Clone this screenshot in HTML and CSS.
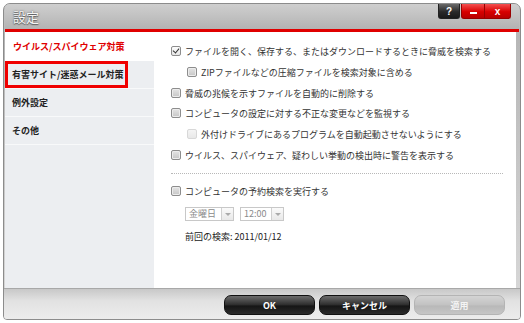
FILE: index.html
```html
<!DOCTYPE html>
<html lang="ja">
<head>
    <meta charset="UTF-8">
    <title>設定</title>
    <link rel="stylesheet" href="styles.css">
</head>
<body>
    <div class="window">
        <div class="titlebar">
            <span class="title">設定</span>
            <div class="caption-buttons">
                <span class="cap help">?</span>
                <span class="cap red min"><i></i></span>
                <span class="cap red close">x</span>
            </div>
        </div>

        <div class="main">
            <ul class="sidebar">
                <li class="active">ウイルス/スパイウェア対策</li>
                <li class="marked"><span class="mark">有害サイト/迷惑メール対策</span></li>
                <li>例外設定</li>
                <li>その他</li>
            </ul>

            <div class="content">
                <div class="row"><span class="check checked"></span>ファイルを開く、保存する、またはダウンロードするときに脅威を検索する</div>
                <div class="row sub"><span class="check"></span>ZIPファイルなどの圧縮ファイルを検索対象に含める</div>
                <div class="row"><span class="check"></span>脅威の兆候を示すファイルを自動的に削除する</div>
                <div class="row"><span class="check"></span>コンピュータの設定に対する不正な変更などを監視する</div>
                <div class="row sub"><span class="check disabled"></span>外付けドライブにあるプログラムを自動起動させないようにする</div>
                <div class="row"><span class="check"></span>ウイルス、スパイウェア、疑わしい挙動の検出時に警告を表示する</div>
                <hr class="dots">
                <div class="row"><span class="check"></span>コンピュータの予約検索を実行する</div>
                <div class="schedule">
                    <span class="select day"><span class="value">金曜日</span><span class="arrow"></span></span>
                    <span class="select time"><span class="value">12:00</span><span class="arrow"></span></span>
                </div>
                <p class="last-scan">前回の検索: 2011/01/12</p>
            </div>
        </div>

        <div class="footer">
            <button class="btn">OK</button>
            <button class="btn">キャンセル</button>
            <button class="btn" disabled>適用</button>
        </div>
    </div>
</body>
</html>
```

FILE: styles.css
```css
body {
    margin: 0;
    padding: 0;
    background-color: #fff;
    font-family: "Noto Sans CJK JP", "Liberation Sans", sans-serif;
    font-size: 9px;
    color: #333;
}

.window {
    margin: 3px 0 0 3px;
    width: 518px;
    height: 317px;
    box-sizing: border-box;
    border: 1px solid #8c8c8c;
    border-radius: 7px 7px 4px 4px;
    background: linear-gradient(#c9c9c9, #b6b6b6 10%, #d6d6d6 90%, #e4e4e4);
    display: flex;
    flex-direction: column;
    overflow: hidden;
}

/* title bar */
.titlebar {
    height: 25px;
    margin: 0 1px;
    border-bottom: 3px solid #e00000;
    display: flex;
    justify-content: space-between;
    align-items: flex-start;
    background: linear-gradient(#cfcfcf, #b3b3b3);
}

.title {
    font-size: 13px;
    line-height: 25px;
    padding-left: 8px;
    color: #f6f6f6;
    text-shadow: 0 0 2px #555, 0 1px 1px #666;
}

.caption-buttons {
    display: flex;
    margin-right: 8px;
}

.cap {
    height: 14px;
    display: flex;
    justify-content: center;
    align-items: center;
    color: #fff;
    font-family: "Liberation Sans", sans-serif;
    font-weight: bold;
    font-size: 10px;
    border-radius: 0 0 3px 3px;
}

.help {
    width: 20px;
    margin-right: 1px;
    background: linear-gradient(#6a6a6a, #2a2a2a 55%, #1a1a1a);
    border: 1px solid #222;
    border-top: none;
}

.red {
    background: linear-gradient(#f45050, #d80000 55%, #b80000);
    border: 1px solid #900;
    border-top: none;
}

.min {
    width: 22px;
    border-radius: 0 0 0 3px;
}

.min i {
    width: 7px;
    height: 2px;
    margin-top: 4px;
    background-color: #fff;
}

.close {
    width: 25px;
    border-left: none;
    border-radius: 0 0 3px 0;
}

/* body */
.main {
    height: 256px;
    margin: 0 4px 0 1px;
    display: flex;
}

.sidebar {
    width: 149px;
    margin: 0;
    padding: 0;
    list-style: none;
    background-color: #eceef1;
}

.sidebar li {
    height: 27px;
    line-height: 27px;
    padding-left: 7px;
    border-bottom: 1px solid #f8f9fa;
    font-weight: bold;
    color: #222;
}

.sidebar li.active {
    height: 29px;
    line-height: 29px;
    padding-left: 8px;
    background-color: #fff;
    color: #e00000;
    border-bottom: none;
}

.sidebar li.marked {
    padding-left: 0;
}

.mark {
    display: inline-block;
    width: 123px;
    height: 27px;
    line-height: 21px;
    box-sizing: border-box;
    padding-left: 4px;
    border: 3px solid #f00000;
}

.content {
    flex: 1;
    background-color: #fff;
    padding: 9px 13px 0 17px;
}

.row {
    height: 20px;
    display: flex;
    align-items: center;
}

.row.sub {
    height: 22px;
    padding-left: 16px;
}

.check {
    width: 10px;
    height: 10px;
    box-sizing: border-box;
    margin-right: 4px;
    border: 1px solid #8d8d8d;
    border-radius: 2px;
    background: linear-gradient(#e4e4e4, #c6c6c6);
    box-shadow: inset 0 0 0 1px #ececec;
    position: relative;
}

.check.checked {
    background: linear-gradient(#fdfdfd, #e6e6e6);
    box-shadow: none;
}

.check.checked::after {
    content: "";
    position: absolute;
    left: 2px;
    top: 0;
    width: 3px;
    height: 5px;
    border: solid #333;
    border-width: 0 1.5px 1.5px 0;
    transform: rotate(40deg);
}

.check.disabled {
    border-color: #d8d8d8;
    background: linear-gradient(#f4f4f4, #e8e8e8);
    box-shadow: none;
}

.dots {
    margin: 8px 0 7px;
    border: none;
    border-top: 1px dotted #b8b8b8;
}

.schedule {
    display: flex;
    gap: 6px;
    margin: 6px 0 0 14px;
}

.select {
    height: 14px;
    box-sizing: border-box;
    display: flex;
    border: 1px solid #c8c8c8;
    color: #8a8a8a;
    white-space: nowrap;
}

.select .value {
    line-height: 12px;
    padding-left: 3px;
    box-sizing: border-box;
}

.day .value {
    width: 35px;
}

.time .value {
    width: 30px;
}

.arrow {
    width: 11px;
    border-left: 1px solid #d0d0d0;
    background: linear-gradient(#fafafa, #e8e8e8);
    position: relative;
}

.arrow::after {
    content: "";
    position: absolute;
    left: 3px;
    top: 5px;
    border: 3px solid transparent;
    border-top: 3px solid #aaa;
    border-bottom: none;
}

.last-scan {
    margin: 9px 0 0 14px;
    color: #222;
}

/* footer */
.footer {
    flex: 1;
    display: flex;
    justify-content: flex-end;
    align-items: center;
    gap: 4px;
    padding: 2px 15px 0 0;
    border-top: 1px solid #a8a8a8;
    background: linear-gradient(#c8c8c8, #e2e2e2 40%, #ececec);
}

.btn {
    width: 91px;
    height: 20px;
    padding: 0;
    border: 1px solid #111;
    border-radius: 7px;
    background: linear-gradient(#6c6c6c, #2c2c2c 50%, #151515 55%, #2a2a2a);
    color: #fff;
    font-family: "Noto Sans CJK JP", "Liberation Sans", sans-serif;
    font-size: 9px;
    font-weight: bold;
}

.btn:disabled {
    border-color: #b4b4b4;
    background: linear-gradient(#d4d4d4, #c2c2c2 50%, #b8b8b8 55%, #c6c6c6);
    color: #f4f4f4;
}
```
